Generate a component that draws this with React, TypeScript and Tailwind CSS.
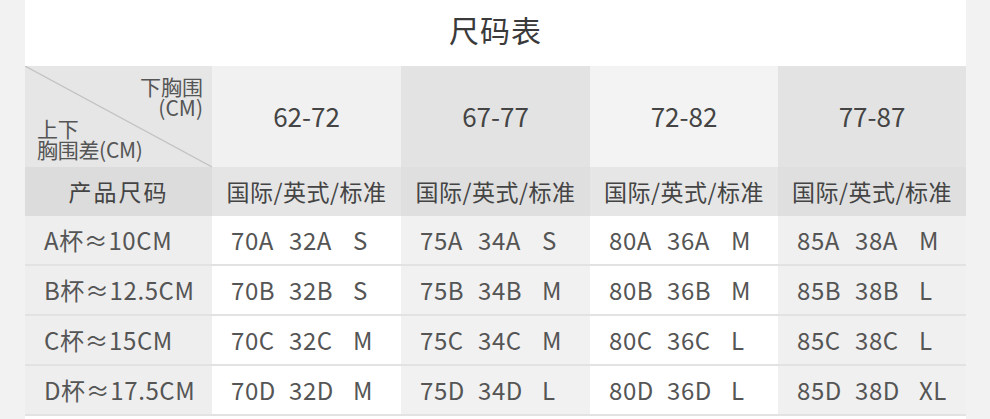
const font = { fontFamily: '"Noto Sans CJK SC", "Noto Sans", sans-serif' };

const ranges = ["62-72", "67-77", "72-82", "77-87"];

const rows = [
  { cup: "A杯≈10CM", cells: [["70A", "32A", "S"], ["75A", "34A", "S"], ["80A", "36A", "M"], ["85A", "38A", "M"]] },
  { cup: "B杯≈12.5CM", cells: [["70B", "32B", "S"], ["75B", "34B", "M"], ["80B", "36B", "M"], ["85B", "38B", "L"]] },
  { cup: "C杯≈15CM", cells: [["70C", "32C", "M"], ["75C", "34C", "M"], ["80C", "36C", "L"], ["85C", "38C", "L"]] },
  { cup: "D杯≈17.5CM", cells: [["70D", "32D", "M"], ["75D", "34D", "L"], ["80D", "36D", "L"], ["85D", "38D", "XL"]] },
];

const colW = ["w-[189px]", "w-[189px]", "w-[188px]", "w-[188px]"];
const headBg = ["bg-[#f1f1f1]", "bg-[#e3e3e3]", "bg-[#f3f3f3]", "bg-[#e3e3e3]"];
const subBg = ["bg-[#e5e5e5]", "bg-[#dfdfdf]", "bg-[#e6e6e6]", "bg-[#dfdfdf]"];
const cellBg = ["bg-white", "bg-[#f1f1f1]", "bg-white", "bg-[#f0f0f0]"];

export default function App() {
  return (
    <div className="w-[990px] h-[419px] overflow-hidden bg-[#f2f2f2] flex" style={font}>
      <div className="w-[25px] shrink-0" />
      <div className="w-[941px] shrink-0 bg-white flex flex-col">
        {/* Title */}
        <div className="h-[66px] flex items-center justify-center pb-[8px]">
          <h1 className="text-[30px] text-[#3a3a3a] tracking-[1px]">尺码表</h1>
        </div>

        {/* Range header */}
        <div className="flex h-[101px]">
          <div className="relative w-[187px] bg-[#e6e6e6] text-[21px] leading-[21px] text-[#555] flex flex-col justify-between pl-[12px] pr-[9px] pt-[10px] pb-[14px]">
            <svg className="absolute inset-0 w-full h-full" viewBox="0 0 187 101" preserveAspectRatio="none">
              <line x1="0" y1="0" x2="187" y2="101" stroke="#c2c2c2" strokeWidth="1.2" />
            </svg>
            <p className="relative text-right">
              下胸围
              <br />
              (CM)
            </p>
            <p className="relative text-left tracking-[-0.3px]">
              上下
              <br />
              胸围差(CM)
            </p>
          </div>
          {ranges.map((r, i) => (
            <div key={r} className={`${colW[i]} ${headBg[i]} flex items-center justify-center pb-[3px] text-[26px] text-[#444]`}>
              {r}
            </div>
          ))}
        </div>

        {/* Sub header */}
        <div className="flex h-[49px]">
          <div className="w-[187px] bg-[#dcdcdc] flex items-center justify-center text-[23px] tracking-[2px] text-[#444]">
            产品尺码
          </div>
          {ranges.map((r, i) => (
            <div key={r} className={`${colW[i]} ${subBg[i]} flex items-center justify-center text-[23px] tracking-[0.5px] text-[#444]`}>
              国际/英式/标准
            </div>
          ))}
        </div>

        {/* Data rows */}
        {rows.map((row) => (
          <div key={row.cup} className="flex h-[50px] border-b-2 border-[#e2e2e2]">
            <div className="w-[187px] bg-[#eeeeee] flex items-center pl-[19px] text-[24px] tracking-[0.6px] text-[#555]">
              {row.cup}
            </div>
            {row.cells.map((c, i) => (
              <div key={i} className={`${colW[i]} ${cellBg[i]} flex items-center pl-[19px] text-[24px] tracking-[0.6px] text-[#555]`}>
                <span className="w-[58px]">{c[0]}</span>
                <span className="w-[64px]">{c[1]}</span>
                <span>{c[2]}</span>
              </div>
            ))}
          </div>
        ))}
      </div>
      <div className="flex-1" />
    </div>
  );
}
